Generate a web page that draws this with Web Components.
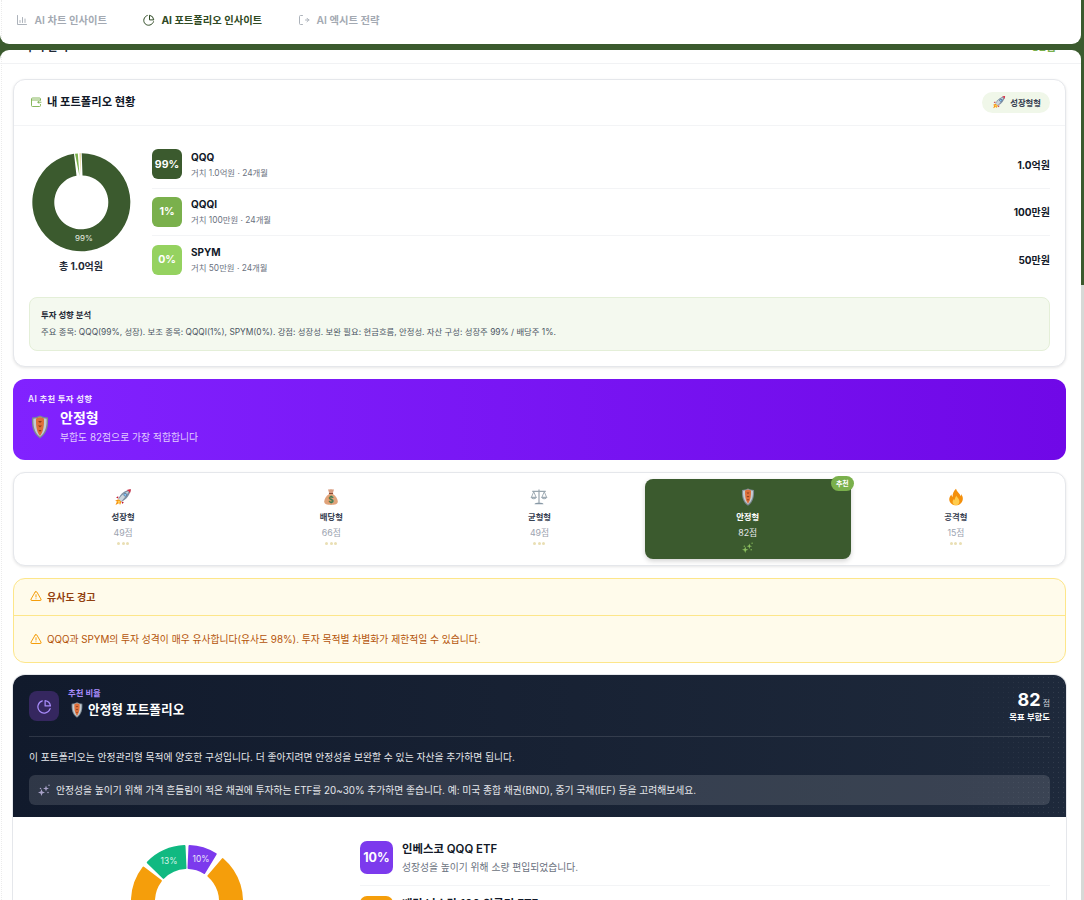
<!DOCTYPE html>
<html lang="ko">
<head>
<meta charset="utf-8">
<title>AI 포트폴리오 인사이트</title>
<style>
    html, body { margin: 0; height: 100%; overflow: hidden; background: #3b5a2e; }
    body { font-family: Inter, "Noto Sans CJK KR", "Noto Sans", sans-serif; color: #1f2937; }
</style>
</head>
<body>
<app-shell>
    <tab-bar slot="tabs">
        <tab-item icon="bars" label="AI 차트 인사이트"></tab-item>
        <tab-item icon="pie" label="AI 포트폴리오 인사이트" active></tab-item>
        <tab-item icon="exit" label="AI 엑시트 전략"></tab-item>
    </tab-bar>

    <ui-card>
        <card-head slot="head" icon="wallet" label="내 포트폴리오 현황">
            <span-pill icon="rocket" label="성장형형"></span-pill>
        </card-head>
        <holdings-panel>
            <holding-donut slot="chart"></holding-donut>
            <holding-row pct="99%" color="#3b5a2e" name="QQQ" sub="거치 1.0억원 · 24개월" value="1.0억원"></holding-row>
            <holding-row pct="1%" color="#7ab04c" name="QQQI" sub="거치 100만원 · 24개월" value="100만원"></holding-row>
            <holding-row pct="0%" color="#95d260" name="SPYM" sub="거치 50만원 · 24개월" value="50만원" last></holding-row>
            <analysis-box slot="note" title="투자 성향 분석">주요 종목: QQQ(99%, 성장). 보조 종목: QQQI(1%), SPYM(0%). 강점: 성장성. 보완 필요: 현금흐름, 안정성. 자산 구성: 성장주 99% / 배당주 1%.</analysis-box>
        </holdings-panel>
    </ui-card>

    <reco-banner></reco-banner>

    <ui-card>
        <type-grid>
            <type-tile icon="rocket" name="성장형" score="49점"></type-tile>
            <type-tile icon="bag" name="배당형" score="66점"></type-tile>
            <type-tile icon="scale" name="균형형" score="49점"></type-tile>
            <type-tile icon="shield" name="안정형" score="82점" selected></type-tile>
            <type-tile icon="fire" name="공격형" score="15점"></type-tile>
        </type-grid>
    </ui-card>

    <warn-card></warn-card>

    <reco-card>
        <mix-row pct="10%" color="#7c3aed" name="인베스코 QQQ ETF" sub="성장성을 높이기 위해 소량 편입되었습니다."></mix-row>
        <mix-row pct="70%" color="#f59e0b" name="배당 나스닥 100 위클리 ETF" sub="꾸준한 현금흐름을 만들어 줍니다."></mix-row>
    </reco-card>
</app-shell>

<script>
const ICONS = {
    bars: `<svg viewBox="0 0 24 24" fill="none" stroke="currentColor" stroke-width="1.8" stroke-linecap="round"><path d="M3 3v18h18M8 17v-4M13 17V7M18 17v-7"/></svg>`,
    pie: `<svg viewBox="0 0 24 24" fill="none" stroke="currentColor" stroke-width="2" stroke-linecap="round" stroke-linejoin="round"><path d="M21 15.5A10 10 0 1 1 8.5 3"/><path d="M21.5 11A10 10 0 0 0 13 2.5V11z"/></svg>`,
    exit: `<svg viewBox="0 0 24 24" fill="none" stroke="currentColor" stroke-width="1.8" stroke-linecap="round" stroke-linejoin="round"><path d="M9 3H5a2 2 0 0 0-2 2v14a2 2 0 0 0 2 2h4M15 12h7M18 8.5l3.5 3.5-3.5 3.5"/></svg>`,
    wallet: `<svg viewBox="0 0 24 24" fill="none" stroke="currentColor" stroke-width="1.8" stroke-linecap="round" stroke-linejoin="round"><path d="M21 8V6a2 2 0 0 0-2-2H5a2 2 0 0 0-2 2v13a2 2 0 0 0 2 2h14a2 2 0 0 0 2-2v-2"/><path d="M3 8h18"/><path d="M22 12.5h-6M18 10.5l-2.500 2 2.500 2"/></svg>`,
    warn: `<svg viewBox="0 0 24 24" fill="none" stroke="#f59e0b" stroke-width="2" stroke-linecap="round" stroke-linejoin="round"><path d="M10.3 4 2.2 18a2 2 0 0 0 1.7 3h16.2a2 2 0 0 0 1.7-3L13.7 4a2 2 0 0 0-3.4 0z"/><path d="M12 9.5v4.5M12 17.5h.01"/></svg>`,
    rocket: `<svg viewBox="0 0 24 24"><path d="M6 15 1.5 17l2.500 1-2 4.500 5-2.500 1 2.500 2-4.500z" fill="#f4900c"/><path d="M6.500 16.500 4 18l1.500.5-.8 2 2.500-1.300.5 1.300 1-2.500z" fill="#ffcc4d"/><path d="M5.500 11 2.800 12.500l3.200 1.800zM13 18.500l-1.500 2.700-1.800-3.200z" fill="#be1931"/><path d="M6 14C9 7 15 2.800 22.500 1.500 21.200 9 17 15 10 18z" fill="#7f8fa3"/><path d="M17 2.700c1 .3 3.700 3 4.300 4.300.6-1.800 1-3.600 1.200-5.500-1.900.3-3.800.6-5.500 1.200z" fill="#dd2e44"/><path d="M6.500 14.500c4-6 8.500-8.800 13.500-10.500-2.500 4.500-5.500 9-10 13.500z" fill="#ccd6dd"/><circle cx="15" cy="9" r="2.400" fill="#55708f"/><circle cx="15" cy="9" r="1.500" fill="#88c9f9"/></svg>`,
    shield: `<svg viewBox="0 0 18 24"><path d="M9 .5c2.500 1.300 5 1.800 8 2 .4 8-.3 15.500-8 21-7.700-5.500-8.400-13-8-21 3-.2 5.500-.7 8-2z" fill="#7d8992"/><path d="M9 2c2.200 1 4.300 1.500 6.600 1.700.2 7-.5 13.300-6.600 18-6.100-4.700-6.800-11-6.600-18C4.700 3.500 6.800 3 9 2z" fill="#c3ccd2"/><path d="M5 3.400C6.400 3 7.800 2.500 9 2c1.200.5 2.600 1 4 1.400.1 6.500-.2 12.500-4 17.700C5.200 15.900 4.900 9.900 5 3.400z" fill="#df6f3a"/><path d="M7 6h4l-2 2zM7 10.500h4l-2 2zM7.500 15h3L9 17z" fill="#8a3c1c"/></svg>`,
    bag: `<svg viewBox="0 0 24 24"><path d="M8 1.500c1.500 1 2.500.2 4 .2s2.500.800 4-.2L14.500 7h-5z" fill="#d99e82"/><path d="M9.500 6.500h5l.4 1.500H9.100z" fill="#8a4b38"/><path d="M9.500 8C5 11 3 15 3 18c0 3.500 3.500 4.500 9 4.500s9-1 9-4.500c0-3-2-7-6.500-10z" fill="#e0a37a"/><text x="12" y="19.5" text-anchor="middle" font-size="11" font-weight="700" fill="#3e7a4e" font-family="Inter, sans-serif">$</text></svg>`,
    scale: `<svg viewBox="0 0 24 24" fill="none" stroke="#99a6af" stroke-width="1.2"><path d="M12 2v18M3 4.500h18" stroke-width="1.6"/><path d="M5 5 1.800 12.500h6.400zM19 5l-3.200 7.500h6.400z"/><path d="M1.500 12.500c.4 2.500 6.500 2.500 7 0zM15.500 12.500c.4 2.500 6.500 2.500 7 0z" fill="#ccd6dd"/><path d="M6 21.500c0-1.500 3-2 6-2s6 .5 6 2z" fill="#8899a6" stroke="none"/></svg>`,
    fire: `<svg viewBox="0 0 24 24"><path d="M12 1c.8 4 5 6 6.500 10 .4-1 .4-2 .2-3 2 2.500 2.800 5 2.300 7.500C20 20 16.500 23 12 23s-8.500-3-9-7.500c-.3-3 1.500-5.500 3-7 0 1.500.5 2.500 1.500 3C7 7.500 9.500 3.500 12 1z" fill="#f4900c"/><path d="M12.500 10c.5 2.500 4 4 4 8 0 3-2 5-4.500 5s-4.500-2-4.500-4.500c0-2 1-3.300 2-4 .1 1 .5 1.500 1 1.800-.2-2.300.8-4.800 2.500-6.300z" fill="#ffcc4d"/></svg>`,
    sparkles: `<svg viewBox="0 0 24 24" fill="currentColor"><path d="M7 10l1.800 5.200L14 17l-5.200 1.800L7 24l-1.800-5.200L0 17l5.200-1.800zM16 3l1.500 4.500L22 9l-4.500 1.500L16 15l-1.500-4.500L10 9l4.500-1.500z"/><circle cx="5" cy="9" r="1.500"/><circle cx="20" cy="17" r="1.500"/><circle cx="22" cy="2.500" r="1.500"/></svg>`
};

// shared base, every element renders once into an open shadow root
class Base extends HTMLElement {
    connectedCallback() {
        if (this.shadowRoot) return;
        this.attachShadow({ mode: "open" }).innerHTML = `<style>${this.css()}</style>${this.html()}`;
    }
    attr(name) {
        return this.getAttribute(name) || "";
    }
}

class AppShell extends Base {
    css() {
        return `
            :host { display: flex; width: 1084px; height: 900px; overflow: hidden; background: #3b5a2e; }
            .col { width: 1081px; flex: none; display: flex; flex-direction: column; gap: 6px; }
            .rail { flex: 1; background: linear-gradient(#3b5a2e 285px, #d6d9d6 285px); }
            .panel { position: relative; flex: 1; min-height: 0; overflow: hidden; background: #fff; border-radius: 9px 9px 0 0; }
            .panel::before { content: ""; position: absolute; left: 1px; top: 0; bottom: 0; border-left: 1px dotted #ececec; }
            .title { height: 34px; margin-top: -20px; box-sizing: border-box; padding: 10px 25px 0; border-bottom: 1px solid #f1f2f4;
                     display: flex; justify-content: space-between; font-size: 11px; font-weight: 700; line-height: 14px; }
            .title span:last-child { color: #7ab04c; }
            .body { display: flex; flex-direction: column; gap: 12px; padding: 15px 15px 0 13px; }
        `;
    }
    html() {
        return `
            <div class="col">
                <slot name="tabs"></slot>
                <div class="panel">
                    <div class="title"><span>투자 분석</span><span>82점</span></div>
                    <div class="body"><slot></slot></div>
                </div>
            </div>
            <div class="rail"></div>
        `;
    }
}

class TabBar extends Base {
    css() {
        return `
            :host { display: flex; height: 44px; flex: none; position: relative; background: #fff; border-radius: 0 0 9px 9px; padding-left: 16px; gap: 36px; align-items: center; box-sizing: border-box; padding-bottom: 4px; }
            :host::before { content: ""; position: absolute; left: 1px; top: 0; bottom: 6px; border-left: 1px dotted #ececec; }
        `;
    }
    html() {
        return `<slot></slot>`;
    }
}

class TabItem extends Base {
    css() {
        const on = this.hasAttribute("active");
        return `
            :host { display: flex; align-items: center; gap: 6.5px; font-size: 10.3px; font-weight: ${on ? 700 : 600}; color: ${on ? "#2f4a24" : "#a3a9b2"}; line-height: 14px; white-space: nowrap; }
            svg { width: 12px; height: 12px; display: block; }
        `;
    }
    html() {
        return `${ICONS[this.attr("icon")]}<span>${this.attr("label")}</span>`;
    }
}

class UiCard extends Base {
    css() {
        return `
            :host { display: block; background: #fff; border: 1px solid #e5e7eb; border-radius: 12px; box-shadow: 0 1px 3px rgba(0,0,0,.1); }
        `;
    }
    html() {
        return `<slot name="head"></slot><slot></slot>`;
    }
}

class CardHead extends Base {
    css() {
        return `
            :host { display: flex; align-items: center; height: 46px; box-sizing: border-box; padding: 0 15px 0 16px; border-bottom: 1px solid #f3f4f6; }
            svg { width: 12px; height: 12px; color: #7ab04c; margin-right: 5px; margin-top: -1px; }
            span { flex: 1; font-size: 11.3px; font-weight: 700; color: #111827; margin-top: -4px; }
        `;
    }
    html() {
        return `${ICONS[this.attr("icon")]}<span>${this.attr("label")}</span><slot></slot>`;
    }
}

class SpanPill extends Base {
    css() {
        return `
            :host { display: flex; align-items: center; gap: 4px; height: 21px; padding: 0 9px 0 10px; background: #f0f7e9; border-radius: 11px; font-size: 8.4px; font-weight: 600; color: #374151; margin-top: -1px; }
            svg { width: 14px; height: 14px; }
        `;
    }
    html() {
        return `${ICONS[this.attr("icon")]}<span>${this.attr("label")}</span>`;
    }
}

class HoldingsPanel extends Base {
    css() {
        return `
            :host { display: block; padding: 15px; }
            .top { display: flex; align-items: center; gap: 19px; margin-bottom: 13.5px; }
            .rows { flex: 1; display: flex; flex-direction: column; }
        `;
    }
    html() {
        return `
            <div class="top">
                <slot name="chart"></slot>
                <div class="rows"><slot></slot></div>
            </div>
            <slot name="note"></slot>
        `;
    }
}

class HoldingDonut extends Base {
    css() {
        return `
            :host { display: block; width: 104px; flex: none; text-align: center; }
            svg { display: block; width: 104px; height: 102px; }
            p { margin: 6px 0 0; font-size: 10px; font-weight: 700; line-height: 14px; color: #1f2937; }
        `;
    }
    html() {
        return `
            <svg viewBox="29 149 104 102">
                <path d="M81.7 151.3A49 49 0 1 1 74 151.85L76.5 173.8A27 27 0 1 0 82.5 173.4Z" fill="#3b5a2e"/>
                <path d="M75 151.7L77.8 151.4L79.5 174Z" fill="#7ab04c"/>
                <path d="M79.3 151.3L81 151.3L80.6 173Z" fill="#e9dca6"/>
                <text x="84" y="239" text-anchor="middle" font-size="8" fill="#e6ece2">99%</text>
            </svg>
            <p>총 1.0억원</p>
        `;
    }
}

class HoldingRow extends Base {
    css() {
        return `
            :host { display: flex; align-items: center; height: 47.5px; box-sizing: border-box; ${this.hasAttribute("last") ? "" : "border-bottom: 1px solid #f3f4f6;"} }
            .pct { width: 30px; height: 30px; flex: none; border-radius: 6px; display: flex; align-items: center; justify-content: center;
                   color: #fff; font-size: 10.5px; font-weight: 700; background: ${this.attr("color")}; }
            .txt { flex: 1; margin-left: 9px; }
            .name { font-size: 10px; font-weight: 700; color: #111827; line-height: 14px; margin-bottom: 3px; }
            .sub { font-size: 8.4px; color: #6b7280; line-height: 12px; }
            .val { font-size: 10px; font-weight: 700; color: #111827; }
        `;
    }
    html() {
        return `
            <div class="pct">${this.attr("pct")}</div>
            <div class="txt"><div class="name">${this.attr("name")}</div><div class="sub">${this.attr("sub")}</div></div>
            <div class="val">${this.attr("value")}</div>
        `;
    }
}

class AnalysisBox extends Base {
    css() {
        return `
            :host { display: block; height: 54px; box-sizing: border-box; padding: 11px 11px 0; background: #f4f9ef; border: 1px solid #e4efd8; border-radius: 8px; }
            h4 { margin: 0 0 5px; font-size: 8.4px; font-weight: 700; line-height: 12px; color: #1f2937; }
            p { margin: 0; font-size: 8.37px; line-height: 12px; color: #4b5563; }
        `;
    }
    html() {
        return `<h4>${this.attr("title")}</h4><p><slot></slot></p>`;
    }
}

class RecoBanner extends Base {
    css() {
        return `
            :host { display: block; height: 81px; box-sizing: border-box; padding: 14px 15px 0; border-radius: 12px; color: #fff; background: linear-gradient(90deg, #8122ff, #7008e7); }
            .tag { font-size: 8.4px; font-weight: 600; line-height: 12px; letter-spacing: .3px; color: rgba(255,255,255,.9); }
            .row { display: flex; align-items: center; margin-top: 3px; }
            svg { width: 18px; height: 24px; margin: 0 11px 0 3px; }
            .name { font-size: 14px; font-weight: 700; line-height: 20px; }
            .sub { font-size: 9.85px; line-height: 16px; color: rgba(255,255,255,.78); margin-top: 1px; }
        `;
    }
    html() {
        return `
            <div class="tag">AI 추천 투자 성향</div>
            <div class="row">${ICONS.shield}<div><div class="name">안정형</div><div class="sub">부합도 82점으로 가장 적합합니다</div></div></div>
        `;
    }
}

class TypeGrid extends Base {
    css() {
        return `
            :host { display: grid; grid-template-columns: repeat(5, 1fr); gap: 2px; padding: 6px; height: 92px; box-sizing: border-box; }
        `;
    }
    html() {
        return `<slot></slot>`;
    }
}

class TypeTile extends Base {
    css() {
        const on = this.hasAttribute("selected");
        return `
            :host { display: flex; flex-direction: column; align-items: center; position: relative; height: 80px; padding-top: 9px; box-sizing: border-box; border-radius: 8px;
                    background: ${on ? "#3b5a2e" : "transparent"}; ${on ? "box-shadow: 0 2px 5px rgba(0,0,0,.18);" : ""} }
            svg.ico { width: 18px; height: 18px; display: block; }
            .name { margin-top: 5px; font-size: 8.4px; font-weight: 600; line-height: 12px; color: ${on ? "#fff" : "#374151"}; }
            .score { margin-top: 4px; font-size: 8.8px; line-height: 12px; color: ${on ? "#e5e7eb" : "#9ca3af"}; }
            .stars { margin-top: 3px; display: flex; gap: 1.5px; }
            .stars i { width: 3px; height: 3px; border-radius: 50%; background: #e9dfb4; }
            .spark { width: 11px; height: 11px; margin-top: 3px; color: #8cc05f; }
            .badge { position: absolute; right: -3px; top: -3px; height: 15px; padding: 0 5px; border-radius: 8px; background: #7ab04c; color: #fff; font-size: 7px; font-weight: 700; line-height: 15px; }
        `;
    }
    html() {
        const on = this.hasAttribute("selected");
        const icon = ICONS[this.attr("icon")].replace("<svg", `<svg class="ico"`);
        const foot = on
            ? ICONS.sparkles.replace("<svg", `<svg class="spark"`) + `<span class="badge">추천</span>`
            : `<div class="stars"><i></i><i></i><i></i></div>`;
        return `${icon}<div class="name">${this.attr("name")}</div><div class="score">${this.attr("score")}</div>${foot}`;
    }
}

class WarnCard extends Base {
    css() {
        return `
            :host { display: block; background: #fffbeb; border: 1px solid #fde68a; border-radius: 12px; color: #b45309; }
            .head, .body { display: flex; align-items: center; gap: 5px; padding-left: 16px; }
            .head { height: 37px; box-sizing: border-box; padding-bottom: 2px; border-bottom: 1px solid #fde68a; font-size: 10px; font-weight: 700; color: #92400e; }
            .body { height: 46px; font-size: 9.8px; }
            svg { width: 12px; height: 12px; flex: none; }
        `;
    }
    html() {
        return `
            <div class="head">${ICONS.warn}<span>유사도 경고</span></div>
            <div class="body">${ICONS.warn}<span>QQQ과 SPYM의 투자 성격이 매우 유사합니다(유사도 98%). 투자 목적별 차별화가 제한적일 수 있습니다.</span></div>
        `;
    }
}

class RecoCard extends Base {
    css() {
        return `
            :host { display: block; background: #fff; border-radius: 12px 12px 0 0; box-shadow: 0 0 0 1px #e5e7eb; height: 400px; overflow: hidden; }
            .dark { position: relative; height: 142px; box-sizing: border-box; padding: 16px 16px 0; background: linear-gradient(90deg, #111a2c, #1e293b); color: #fff; }
            .dark::after { content: ""; position: absolute; right: 0; top: 0; bottom: 0; width: 110px; pointer-events: none;
                           background: radial-gradient(rgba(255,255,255,.1) .6px, transparent .8px) 0 0 / 5px 5px;
                           -webkit-mask-image: linear-gradient(90deg, transparent, #000); }
            .top { display: flex; align-items: center; height: 30px; }
            .box { width: 30px; height: 30px; border-radius: 8px; background: #35275f; color: #a78bfa; display: flex; align-items: center; justify-content: center; margin-right: 9px; }
            .box svg { width: 15px; height: 15px; }
            .eyebrow { font-size: 8.4px; font-weight: 700; line-height: 11px; color: #a78bfa; margin-top: -4px; }
            .ttl { display: flex; align-items: center; gap: 5px; padding-left: 3px; font-size: 12.7px; font-weight: 700; line-height: 20px; margin-top: 1px; }
            .ttl svg { width: 12px; height: 16px; }
            .score { margin-left: auto; text-align: right; }
            .score b { font-size: 18px; font-weight: 700; line-height: 20px; }
            .score small { font-size: 8px; margin-left: 2px; color: #d1d5db; }
            .score div { font-size: 8.4px; font-weight: 600; line-height: 12px; margin-top: 1px; }
            hr { margin: 15px 0 0; border: 0; border-top: 1px solid rgba(255,255,255,.12); }
            p { margin: 13px 0 0; font-size: 9.8px; line-height: 15px; color: #e5e7eb; }
            .tip { display: flex; align-items: center; gap: 6px; height: 30px; margin-top: 10px; padding-left: 9px; border-radius: 6px; background: rgba(255,255,255,.13); font-size: 9.8px; color: #e5e7eb; }
            .tip svg { width: 12px; height: 12px; color: #a8a2c8; }
            .low { display: flex; padding: 24px 16px 0; }
            .chart { width: 331px; flex: none; }
            .chart svg { display: block; width: 316px; height: 130px; }
            .rows { flex: 1; }
        `;
    }
    html() {
        return `
            <div class="dark">
                <div class="top">
                    <div class="box">${ICONS.pie}</div>
                    <div><div class="eyebrow">추천 비율</div><div class="ttl">${ICONS.shield}<span>안정형 포트폴리오</span></div></div>
                    <div class="score"><b>82</b><small>점</small><div>목표 부합도</div></div>
                </div>
                <hr>
                <p>이 포트폴리오는 안정관리형 목적에 양호한 구성입니다. 더 좋아지려면 안정성을 보완할 수 있는 자산을 추가하면 됩니다.</p>
                <div class="tip">${ICONS.sparkles}<span>안정성을 높이기 위해 가격 흔들림이 적은 채권에 투자하는 ETF를 20~30% 추가하면 좋습니다. 예: 미국 종합 채권(BND), 중기 국채(IEF) 등을 고려해보세요.</span></div>
            </div>
            <div class="low">
                <div class="chart">${this.pie()}</div>
                <div class="rows"><slot></slot></div>
            </div>
        `;
    }
    // ring slices, angles in degrees clockwise from the top
    pie() {
        const cx = 158, cy = 60, R = 55, r = 33;
        const pt = (rad, a) => {
            const t = (a - 90) * Math.PI / 180;
            return `${(cx + rad * Math.cos(t)).toFixed(2)} ${(cy + rad * Math.sin(t)).toFixed(2)}`;
        };
        const slices = [
            [2.6, 31.5, "#7c3aed"],
            [40.5, 170, "#f59e0b"],
            [170, 307.5, "#f59e0b"],
            [-45.5, -2.6, "#10b981"]
        ];
        const paths = slices.map(([a, b, c]) => {
            const big = b - a > 180 ? 1 : 0;
            return `<path d="M${pt(R, a)}A${R} ${R} 0 ${big} 1 ${pt(R, b)}L${pt(r, b)}A${r} ${r} 0 ${big} 0 ${pt(r, a)}Z" fill="${c}" stroke="${c}" stroke-width="2" stroke-linejoin="round"/>`;
        }).join("");
        return `<svg viewBox="0 0 316 130">${paths}
            <text x="172" y="21" text-anchor="middle" font-size="8.4" fill="#e9e3fb">10%</text>
            <text x="140" y="23" text-anchor="middle" font-size="8.4" fill="#d5f3e8">13%</text></svg>`;
    }
}

class MixRow extends Base {
    css() {
        return `
            :host { display: flex; align-items: flex-start; height: 45px; margin-bottom: 10px; box-sizing: border-box; border-bottom: 1px solid #f3f4f6; }
            .pct { width: 33px; height: 33px; flex: none; border-radius: 7px; display: flex; align-items: center; justify-content: center;
                   color: #fff; font-size: 12.5px; font-weight: 700; background: ${this.attr("color")}; }
            .txt { margin: 1px 0 0 9px; }
            .name { font-size: 11.4px; font-weight: 600; line-height: 15px; color: #111827; margin-bottom: 4px; }
            .sub { font-size: 9.8px; line-height: 13px; color: #6b7280; }
        `;
    }
    html() {
        return `
            <div class="pct">${this.attr("pct")}</div>
            <div class="txt"><div class="name">${this.attr("name")}</div><div class="sub">${this.attr("sub")}</div></div>
        `;
    }
}

customElements.define("app-shell", AppShell);
customElements.define("tab-bar", TabBar);
customElements.define("tab-item", TabItem);
customElements.define("ui-card", UiCard);
customElements.define("card-head", CardHead);
customElements.define("span-pill", SpanPill);
customElements.define("holdings-panel", HoldingsPanel);
customElements.define("holding-donut", HoldingDonut);
customElements.define("holding-row", HoldingRow);
customElements.define("analysis-box", AnalysisBox);
customElements.define("reco-banner", RecoBanner);
customElements.define("type-grid", TypeGrid);
customElements.define("type-tile", TypeTile);
customElements.define("warn-card", WarnCard);
customElements.define("reco-card", RecoCard);
customElements.define("mix-row", MixRow);
</script>
</body>
</html>
